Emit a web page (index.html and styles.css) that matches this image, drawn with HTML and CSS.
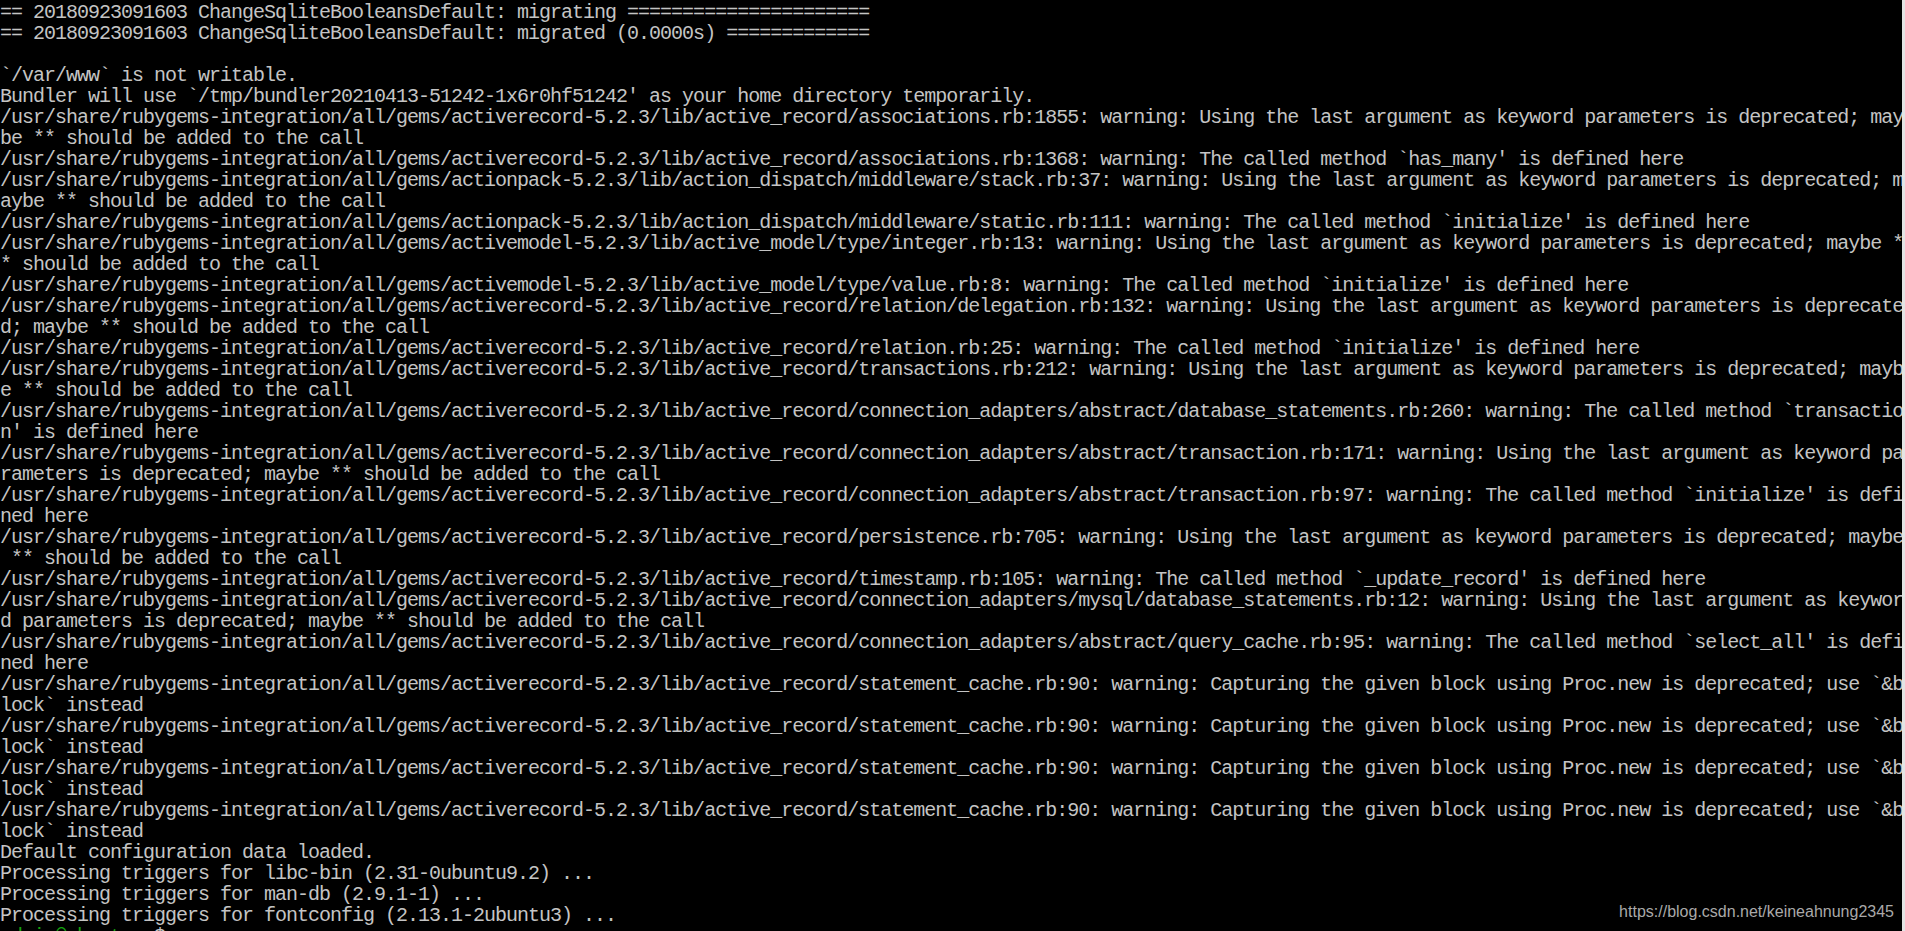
FILE: index.html
```html
<!DOCTYPE html>
<html lang="en">
<head>
<meta charset="utf-8">
<title>Terminal</title>
<link rel="stylesheet" href="styles.css">
</head>
<body>
<div class="window">
<main class="term">
<pre class="out">== 20180923091603 ChangeSqliteBooleansDefault: migrating ======================
== 20180923091603 ChangeSqliteBooleansDefault: migrated (0.0000s) =============

`/var/www` is not writable.
Bundler will use `/tmp/bundler20210413-51242-1x6r0hf51242' as your home directory temporarily.
/usr/share/rubygems-integration/all/gems/activerecord-5.2.3/lib/active_record/associations.rb:1855: warning: Using the last argument as keyword parameters is deprecated; may
be ** should be added to the call
/usr/share/rubygems-integration/all/gems/activerecord-5.2.3/lib/active_record/associations.rb:1368: warning: The called method `has_many' is defined here
/usr/share/rubygems-integration/all/gems/actionpack-5.2.3/lib/action_dispatch/middleware/stack.rb:37: warning: Using the last argument as keyword parameters is deprecated; m
aybe ** should be added to the call
/usr/share/rubygems-integration/all/gems/actionpack-5.2.3/lib/action_dispatch/middleware/static.rb:111: warning: The called method `initialize' is defined here
/usr/share/rubygems-integration/all/gems/activemodel-5.2.3/lib/active_model/type/integer.rb:13: warning: Using the last argument as keyword parameters is deprecated; maybe *
* should be added to the call
/usr/share/rubygems-integration/all/gems/activemodel-5.2.3/lib/active_model/type/value.rb:8: warning: The called method `initialize' is defined here
/usr/share/rubygems-integration/all/gems/activerecord-5.2.3/lib/active_record/relation/delegation.rb:132: warning: Using the last argument as keyword parameters is deprecate
d; maybe ** should be added to the call
/usr/share/rubygems-integration/all/gems/activerecord-5.2.3/lib/active_record/relation.rb:25: warning: The called method `initialize' is defined here
/usr/share/rubygems-integration/all/gems/activerecord-5.2.3/lib/active_record/transactions.rb:212: warning: Using the last argument as keyword parameters is deprecated; mayb
e ** should be added to the call
/usr/share/rubygems-integration/all/gems/activerecord-5.2.3/lib/active_record/connection_adapters/abstract/database_statements.rb:260: warning: The called method `transactio
n' is defined here
/usr/share/rubygems-integration/all/gems/activerecord-5.2.3/lib/active_record/connection_adapters/abstract/transaction.rb:171: warning: Using the last argument as keyword pa
rameters is deprecated; maybe ** should be added to the call
/usr/share/rubygems-integration/all/gems/activerecord-5.2.3/lib/active_record/connection_adapters/abstract/transaction.rb:97: warning: The called method `initialize' is defi
ned here
/usr/share/rubygems-integration/all/gems/activerecord-5.2.3/lib/active_record/persistence.rb:705: warning: Using the last argument as keyword parameters is deprecated; maybe
 ** should be added to the call
/usr/share/rubygems-integration/all/gems/activerecord-5.2.3/lib/active_record/timestamp.rb:105: warning: The called method `_update_record' is defined here
/usr/share/rubygems-integration/all/gems/activerecord-5.2.3/lib/active_record/connection_adapters/mysql/database_statements.rb:12: warning: Using the last argument as keywor
d parameters is deprecated; maybe ** should be added to the call
/usr/share/rubygems-integration/all/gems/activerecord-5.2.3/lib/active_record/connection_adapters/abstract/query_cache.rb:95: warning: The called method `select_all' is defi
ned here
/usr/share/rubygems-integration/all/gems/activerecord-5.2.3/lib/active_record/statement_cache.rb:90: warning: Capturing the given block using Proc.new is deprecated; use `&amp;b
lock` instead
/usr/share/rubygems-integration/all/gems/activerecord-5.2.3/lib/active_record/statement_cache.rb:90: warning: Capturing the given block using Proc.new is deprecated; use `&amp;b
lock` instead
/usr/share/rubygems-integration/all/gems/activerecord-5.2.3/lib/active_record/statement_cache.rb:90: warning: Capturing the given block using Proc.new is deprecated; use `&amp;b
lock` instead
/usr/share/rubygems-integration/all/gems/activerecord-5.2.3/lib/active_record/statement_cache.rb:90: warning: Capturing the given block using Proc.new is deprecated; use `&amp;b
lock` instead
Default configuration data loaded.
Processing triggers for libc-bin (2.31-0ubuntu9.2) ...
Processing triggers for man-db (2.9.1-1) ...
Processing triggers for fontconfig (2.13.1-2ubuntu3) ...
<span class="user">admin@ubuntu</span>:<span class="path">~</span>$ </pre>
<div class="watermark">https://blog.csdn.net/keineahnung2345</div>
</main>
<div class="edge"></div>
</div>
</body>
</html>
```

FILE: styles.css
```css
html, body {
  margin: 0;
  padding: 0;
  background: #000;
  height: 931px;
  overflow: hidden;
}

.window {
  display: flex;
  height: 931px;
}

.term {
  position: relative;
  flex: 1;
  min-width: 0;
  background: #000;
  overflow: hidden;
}

.out {
  margin: 0;
  padding: 2px 0 0 0;
  font-family: "Liberation Mono", "DejaVu Sans Mono", monospace;
  font-size: 20px;
  letter-spacing: -1px;
  line-height: 21px;
  color: #c4c4c4;
  white-space: pre;
}

.user {
  color: #13a10e;
}

.path {
  color: #3b78ff;
}

.edge {
  width: 3px;
  background: #e4e4e4;
}

.watermark {
  position: absolute;
  right: 8px;
  top: 902px;
  font-family: "Liberation Sans", Arial, sans-serif;
  font-size: 16px;
  line-height: 20px;
  color: #a9a9a9;
}
```
